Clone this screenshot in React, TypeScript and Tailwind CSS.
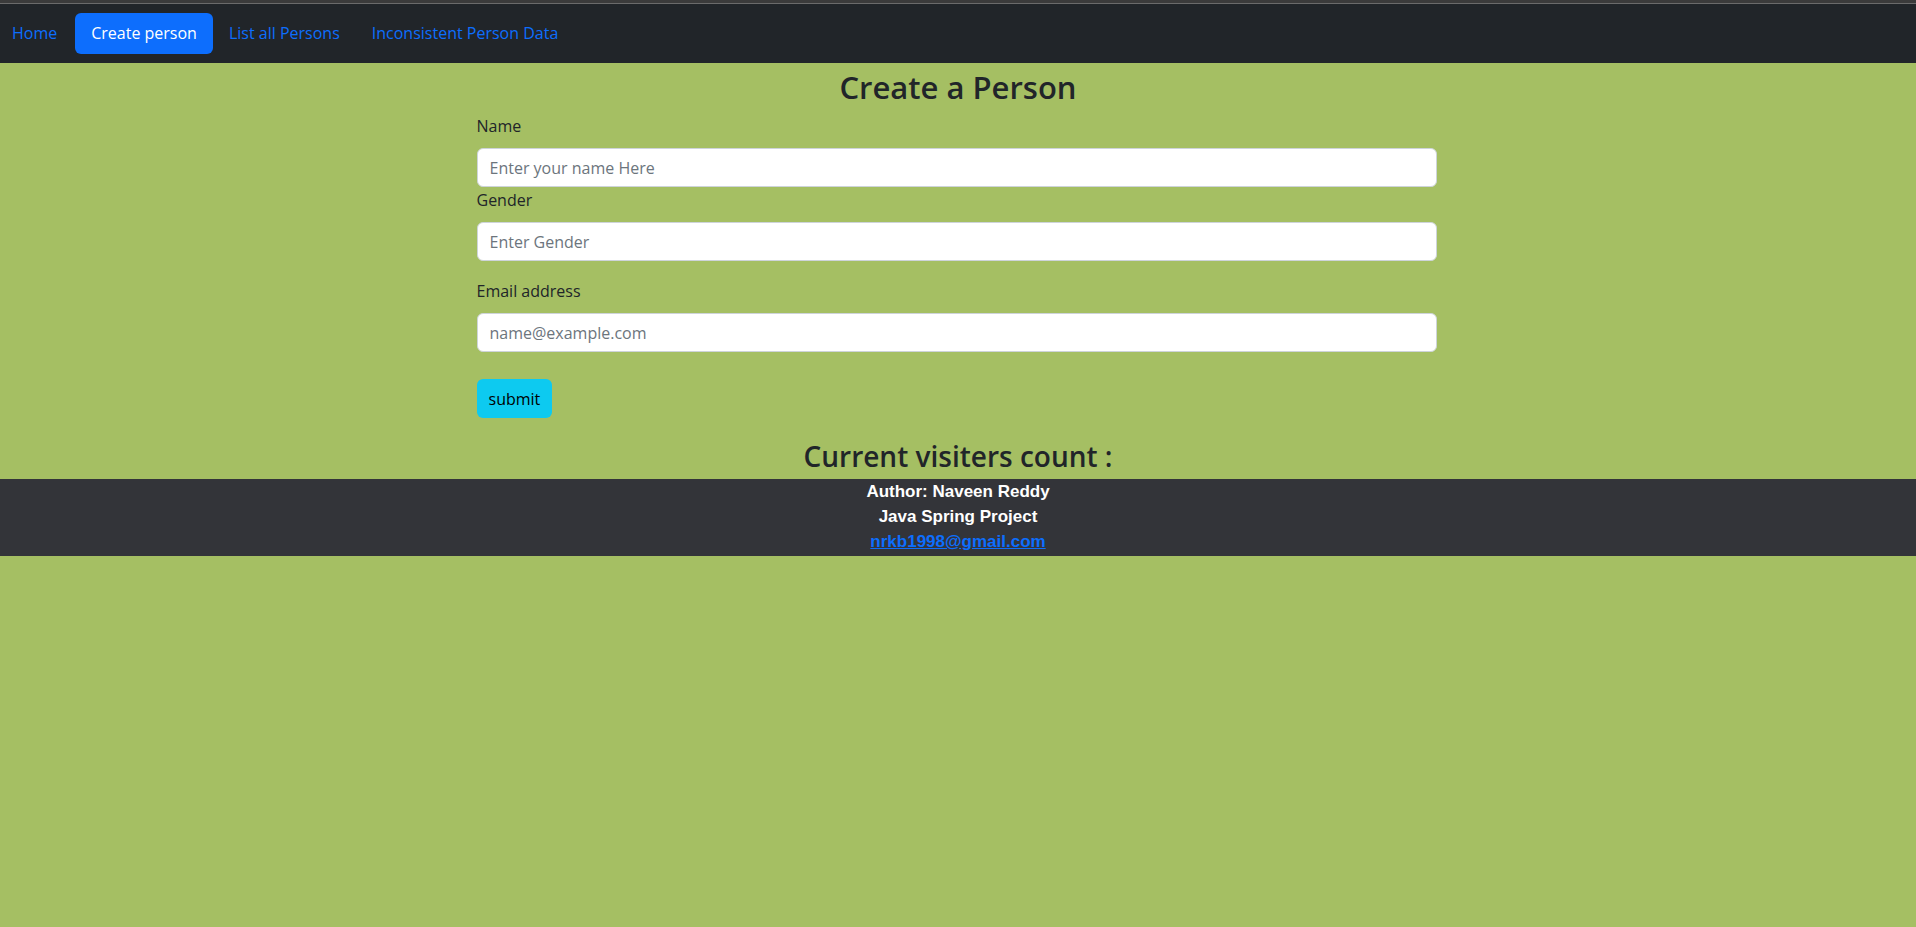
import React from 'react';

const navLinks = ['Home', 'Create person', 'List all Persons', 'Inconsistent Person Data'];

function Field({ label, placeholder, type = 'text', className = '' }: { label: string; placeholder: string; type?: string; className?: string }) {
  return (
    <div className={className}>
      <label className="block h-6 leading-6 text-[16px] text-[#212529]">{label}</label>
      <input
        type={type}
        placeholder={placeholder}
        className="mt-[10px] block h-[39px] w-full rounded-md border border-[#ced4da] bg-white px-3 text-[16px] text-[#212529] outline-none placeholder:text-[#6c757d]"
      />
    </div>
  );
}

export default function App() {
  return (
    <div className="min-h-[927px] bg-[#a5bf63]" style={{ fontFamily: '"Open Sans", "Noto Sans", sans-serif' }}>
      <div className="h-[3px] bg-[#3b3b3b]" />
      <div className="h-px bg-[#6b6b6b]" />
      <nav className="flex items-center bg-[#212529] py-[9px]">
        {navLinks.map((link) => (
          <a
            key={link}
            href="#"
            className={`block h-[41px] leading-[41px] text-[16px] ${link === 'Home' ? 'pl-3 pr-[18px]' : 'px-4'} ${
              link === 'Create person' ? 'rounded-md bg-[#0d6efd] text-white' : 'text-[#0d6efd]'
            }`}
          >
            {link}
          </a>
        ))}
      </nav>

      <h2 className="mt-[5px] text-center text-[31px] font-semibold leading-[38px] text-[#212529]">Create a Person</h2>

      {/* form column sits a couple px left of true center in the original */}
      <div className="flex justify-center pr-[3px]">
        <form className="mt-2 w-[960px]" onSubmit={(e) => e.preventDefault()}>
          <Field label="Name" placeholder="Enter your name Here" />
          <Field label="Gender" placeholder="Enter Gender" className="mt-px" />
          <Field label="Email address" placeholder="name@example.com" type="email" className="mt-[18px]" />
          <button
            type="submit"
            className="mt-[27px] h-[39px] rounded-md bg-[#0dcaf0] px-3 text-[16px] text-black"
          >
            submit
          </button>
        </form>
      </div>

      <h3 className="mt-[21px] text-center text-[28px] font-semibold leading-[34px] text-[#212529]">Current visiters count :</h3>

      <footer
        className="mt-[6px] bg-[#333439] pb-[2px] text-center text-[17px] font-bold leading-[25px] text-white"
        style={{ fontFamily: '"Liberation Sans", Arial, sans-serif' }}
      >
        <p>Author: Naveen Reddy</p>
        <p>Java Spring Project</p>
        <p>
          <a href="#" className="text-[#0d6efd] underline">nrkb1998@gmail.com</a>
        </p>
      </footer>
    </div>
  );
}
